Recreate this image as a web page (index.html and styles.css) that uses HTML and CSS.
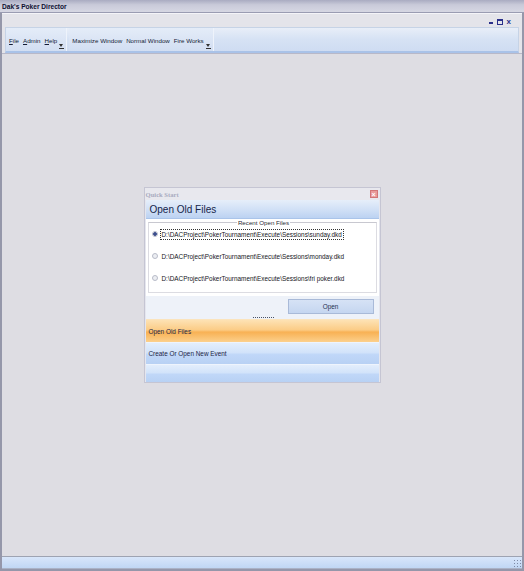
FILE: index.html
```html
<!DOCTYPE html>
<html lang="en">
<head>
  <meta charset="UTF-8" />
  <title>Dak's Poker Director</title>
  <link rel="stylesheet" href="styles.css">
</head>
<body>
  <div class="window">
    <div class="titlebar">Dak's Poker Director</div>
    <div class="menubar">
      <div class="win-ctrls">
        <span class="ctl-min"></span>
        <span class="ctl-max"></span>
        <span class="ctl-close">x</span>
      </div>
    </div>
    <div class="toolbar-wrap">
      <div class="toolbar">
        <div class="tb-group">
          <span><u>F</u>ile</span>
          <span><u>A</u>dmin</span>
          <span><u>H</u>elp</span>
          <span class="tb-more"></span>
        </div>
        <div class="tb-group">
          <span>Maximize Window</span>
          <span>Normal Window</span>
          <span>Fire Works</span>
          <span class="tb-more"></span>
        </div>
      </div>
    </div>

    <div class="client">
      <div class="dialog">
        <div class="dlg-title">
          <span>Quick Start</span>
          <span class="dlg-close">&times;</span>
        </div>
        <div class="dlg-head">Open Old Files</div>
        <div class="dlg-body">
          <fieldset class="files">
            <legend>Recent Open Files</legend>
            <label class="file-row"><span class="radio checked"></span><span class="path focus">D:\DACProject\PokerTournament\Execute\Sessions\sunday.dkd</span></label>
            <label class="file-row"><span class="radio"></span><span class="path">D:\DACProject\PokerTournament\Execute\Sessions\monday.dkd</span></label>
            <label class="file-row"><span class="radio"></span><span class="path">D:\DACProject\PokerTournament\Execute\Sessions\fri poker.dkd</span></label>
          </fieldset>
        </div>
        <div class="dlg-actions">
          <button class="open-btn">Open</button>
        </div>
        <div class="grip"></div>
        <div class="nav-item active">Open Old Files</div>
        <div class="nav-item">Create Or Open New Event</div>
        <div class="nav-item empty"></div>
      </div>
    </div>

    <div class="statusbar"><span class="size-grip"></span></div>
  </div>
</body>
</html>
```

FILE: styles.css
```css
* { box-sizing: border-box; }
html, body { margin: 0; height: 100%; }
body { font-family: "Liberation Sans", Arial, sans-serif; font-size: 6.2px; color: #141c36; background: #dedde3; }

.window { height: 571px; display: flex; flex-direction: column; border: 2px solid #9597aa; border-top: none; }

.titlebar { height: 13px; margin: 0 -2px; padding: 3px 0 0 2px; font-size: 6.6px; font-weight: bold; color: #0d1030; background: linear-gradient(#a9abc1, #c9cad9 40%, #d6d7e3); border-bottom: 1px solid #9a9cb2; }

.menubar { height: 14px; display: flex; justify-content: flex-end; align-items: center; background: #e4e4ea; border-top: 1px solid #f4f4f8; padding-right: 11px; }
.win-ctrls { display: flex; gap: 4px; align-items: center; padding-top: 2px; }
.ctl-min { width: 4px; height: 2px; background: #2a2f8a; margin-top: 3px; }
.ctl-max { width: 6px; height: 6px; border: 1px solid #2a2f8a; border-top-width: 2px; }
.ctl-close { font-size: 8px; font-weight: bold; color: #2a2f8a; line-height: 7px; }

.toolbar-wrap { padding: 0 3px; background: #e4e4ea; }
.toolbar { height: 26px; display: flex; padding: 0 4px 0 0; border: 1px solid #c6d3e6; border-bottom: 2px solid #a9c2e8; background: linear-gradient(#e8eef8, #d6e2f4 50%, #cfdcf2); }
.tb-group { position: relative; display: flex; align-items: center; gap: 4px; padding: 2px 9px 0 3px; margin-right: 2px; border-right: 1px solid #eef3fb; background: linear-gradient(#e4ecf8, #d2def2); }
.tb-group span { white-space: nowrap; }
.tb-group .tb-more { position: absolute; right: 2px; bottom: 2px; width: 5px; height: 6px; border-bottom: 1px solid #333; }
.tb-group .tb-more::after { content: ""; position: absolute; left: 0; top: 1px; border: 2.5px solid transparent; border-top: 3px solid #333; }
u { text-decoration: underline; }

.client { flex: 1; border-top: 1px solid #b8b8c8; }
.dialog { width: 237px; margin: 133px auto 0; border: 1px solid #c5c5d3; background: #e5e6ee; }

.dlg-title { height: 12px; display: flex; justify-content: space-between; align-items: center; padding: 0 2px 0 1px; font-family: "Liberation Serif", serif; font-size: 6.6px; font-weight: bold; color: #a9abc0; background: #e8e8ee; }
.dlg-close { width: 8px; height: 8px; font-family: "Liberation Sans", sans-serif; font-size: 7px; line-height: 7px; text-align: center; color: #fff; background: #e99a9a; border: 1px solid #d27777; }

.dlg-head { height: 19px; margin: 0 1px; padding: 4px 4px 0; font-size: 10px; color: #14244a; background: linear-gradient(#e6eefa, #d2e1f6 50%, #bcd2f2); border-bottom: 1px solid #aac4ea; }

.dlg-body { margin: 0 1px; padding: 0 2px 3px; background: #fff; }
.files { margin: 0; padding: 0 0 3px 3px; border: 1px solid #dcdce2; border-top-color: #c8c8d0; }
.files legend { margin: 0 auto; padding: 0 1px; color: #2a2a34; }
.file-row { height: 22px; display: flex; align-items: center; gap: 3px; font-size: 6.4px; color: #161624; }
.file-row:first-of-type { margin-top: -3px; }
.radio { width: 6px; height: 6px; border-radius: 50%; border: 1px solid #b8bcc8; background: #eceef3; }
.radio.checked { background: radial-gradient(circle, #3c4f8e 0 1.6px, #d7dbe6 2px); }
.path { padding: 1px; white-space: nowrap; }
.path.focus { outline: 1px dotted #333; background: #fff; }

.dlg-actions { height: 21px; display: flex; justify-content: flex-end; align-items: center; padding-right: 5px; margin: 0 1px; background: #eef2f9; }
.open-btn { width: 86px; height: 15px; font-family: inherit; font-size: 6.4px; color: #23304f; border: 1px solid #a9bad8; background: linear-gradient(#d6e2f5, #c5d6f0); }

.grip { height: 2px; margin: 0 1px; background: #eef2f9; position: relative; }
.grip::after { content: ""; position: absolute; left: 107px; width: 21px; top: 0; height: 1px; background: repeating-linear-gradient(90deg, #4a5366 0 1px, transparent 1px 2px); }

.nav-item { height: 22px; margin: 0 1px; padding: 0 3px; display: flex; align-items: center; font-size: 6.4px; color: #1c2444; background: linear-gradient(#e3eefc, #d2e3fa 45%, #c0d7f8 55%, #b8d1f4); border-top: 1px solid #eef4fd; }
.nav-item.active { height: 23px; background: linear-gradient(#fde2b4, #fbcc86 45%, #f8b154 55%, #fcd08c); border-top-color: #fbe4bd; }
.nav-item.empty { height: 18px; }

.statusbar { height: 13px; position: relative; border-top: 1px solid #9ea3b2; background: linear-gradient(#d8e6fa, #c0d6f4); border-bottom: 1px solid #aab2c6; }
.size-grip { position: absolute; right: 1px; bottom: 1px; width: 8px; height: 8px; background: radial-gradient(circle, #7d8aa5 0.7px, transparent 0.9px) 0 0 / 3px 3px; }
```
